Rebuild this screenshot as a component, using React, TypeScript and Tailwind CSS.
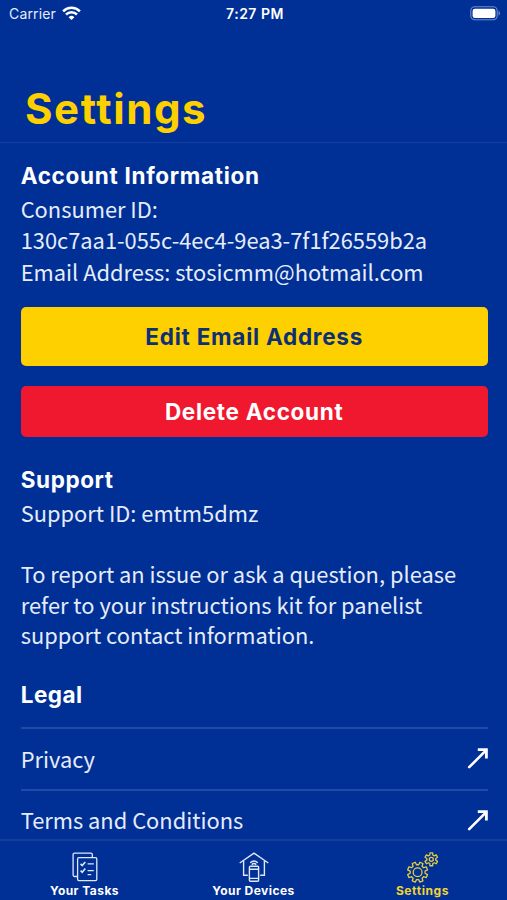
import React from "react";

const heading = "font-['Inter',sans-serif] font-bold text-white whitespace-nowrap";

const App: React.FC = () => {
  return (
    <div className="flex h-[900px] w-[507px] flex-col overflow-hidden bg-[#003095] font-['Noto_Sans_CJK_SC',sans-serif]">
      <StatusBar />
      <header className="flex h-[115px] shrink-0 items-end border-b border-[#143f9f] px-[25px] pb-1.5">
        <h1 className="font-['Inter',sans-serif] text-[42px] leading-[54px] font-bold tracking-[1.6px] text-[#ffd000]">
          Settings
        </h1>
      </header>
      <main className="flex min-h-0 flex-1 flex-col overflow-hidden pt-[19px] pr-[19.3px] pl-[20.7px]">
        <h2 className={`${heading} text-[22.5px] leading-7 tracking-[0.7px]`}>Account Information</h2>
        <div className="mt-[3px] text-[21.85px] leading-[31.3px] whitespace-nowrap text-[#e6ecfa]">
          <p>Consumer ID:</p>
          <p>130c7aa1-055c-4ec4-9ea3-7f1f26559b2a</p>
          <p>Email Address: stosicmm@hotmail.com</p>
        </div>
        <button className="mt-[20.4px] h-[59px] shrink-0 rounded-[5px] bg-[#ffd000] font-['Inter',sans-serif] text-[22.5px] font-bold tracking-[0.75px] text-[#0d2f74]">
          Edit Email Address
        </button>
        <button className="mt-5 h-[51px] shrink-0 rounded-[5px] bg-[#f0182f] font-['Inter',sans-serif] text-[22.5px] font-bold tracking-[0.7px] text-white">
          Delete Account
        </button>
        <h2 className={`${heading} mt-[29px] text-[22.5px] leading-7 tracking-[0.6px]`}>Support</h2>
        <p className="mt-[3px] text-[21.85px] leading-[31px] text-[#e6ecfa]">Support ID: emtm5dmz</p>
        <div className="mt-[31px] text-[21.85px] leading-[30.5px] whitespace-nowrap text-[#e6ecfa]">
          <p>To report an issue or ask a question, please</p>
          <p>refer to your instructions kit for panelist</p>
          <p>support contact information.</p>
        </div>
        <h2 className={`${heading} mt-[30.4px] text-[22.5px] leading-7 tracking-[0.5px]`}>Legal</h2>
        <div className="mt-[18px]">
          <LegalRow label="Privacy" />
          <LegalRow label="Terms and Conditions" />
        </div>
      </main>
      <TabBar />
    </div>
  );
};

const StatusBar = () => (
  <div className="grid h-7 shrink-0 grid-cols-3 items-center pr-[6px] pl-[9px] font-['Inter',sans-serif] text-[14px] text-[#e6ecfa]">
    <div className="flex items-center gap-1.5 pb-px">
      <span className="tracking-[0.15px]">Carrier</span>
      <svg width="19" height="15" viewBox="0 0 19 15" fill="none" stroke="#fff" strokeWidth="2.5">
        <path d="M1.1 5.3a12 12 0 0 1 16.8 0" />
        <path d="M4 8.5a7.9 7.9 0 0 1 11 0" />
        <path d="M6.6 11.2a4.1 4.1 0 0 1 5.8 0L9.5 14.1z" fill="#fff" stroke="none" />
      </svg>
    </div>
    <span className="pb-px text-center font-semibold tracking-[0.5px] text-white">7:27 PM</span>
    <svg className="mb-0.5 justify-self-end" width="31" height="15" viewBox="0 0 31 15">
      <rect x="0.8" y="0.8" width="26.4" height="13" rx="4" fill="none" stroke="#6f8cca" strokeWidth="1.1" />
      <rect x="2.6" y="2.7" width="22.8" height="9.2" rx="2.2" fill="#fff" />
      <path d="M28.6 5v4.6c1.9-.6 1.9-4 0-4.6z" fill="#6f8cca" />
    </svg>
  </div>
);

const LegalRow = ({ label }: { label: string }) => (
  <a className="flex h-[61.5px] items-center justify-between border-t-2 border-[#1f4ba6] pb-px text-[21.85px] leading-[31px] text-[#e6ecfa]">
    <span>{label}</span>
    <svg width="22" height="22" viewBox="0 0 22 22" fill="none" stroke="#fff" strokeWidth="2.6">
      <path d="M3.2 20.2 20 3.4" strokeLinecap="round" />
      <path d="M11.8 2.6h8.6v8.8" strokeWidth="2.8" />
    </svg>
  </a>
);

// toothed outline shared by the big and the small gear
const gearPath = (cx: number, cy: number, outer: number, inner: number, teeth: number) => {
  const points: string[] = [];
  const step = (Math.PI * 2) / teeth;
  for (let i = 0; i < teeth; i++) {
    const a = (i + (teeth === 8 ? 0.5 : 0)) * step - Math.PI / 2;
    [
      [-0.32, inner],
      [-0.2, outer],
      [0.2, outer],
      [0.32, inner],
    ].forEach(([t, r]) => {
      points.push(`${(cx + Math.cos(a + t * step) * r).toFixed(2)} ${(cy + Math.sin(a + t * step) * r).toFixed(2)}`);
    });
  }
  return `M${points.join("L")}Z`;
};

const TasksIcon = () => (
  <svg width="26" height="30" viewBox="0 0 26 30" fill="none" stroke="#dfe7fa" strokeWidth="1.3">
    <path d="M5.5 24.5H2.6a1.5 1.5 0 0 1-1.5-1.5V2.6a1.5 1.5 0 0 1 1.5-1.5h16.2a1.5 1.5 0 0 1 1.5 1.5v2.7" />
    <rect x="5.6" y="5.6" width="19.2" height="23" rx="1.3" />
    <path d="m8.6 11.9 1.6 1.6 3.1-3.6M8.6 18.6l1.6 1.6 3.1-3.6" strokeWidth="1.6" />
    <path d="M15.6 11.9h6.2M15.6 18.6h6.2M15.6 22.7h3.6" />
  </svg>
);

const DevicesIcon = () => (
  <svg width="30" height="30" viewBox="0 0 30 30" fill="none" stroke="#dfe7fa" strokeWidth="1.4">
    <path d="M.7 11 15 1.2 29.3 11" />
    <path d="M4.6 9v14.2h4.2M25.4 9v14.2h-4.2" />
    <rect x="10.4" y="14.3" width="9.2" height="14.9" rx="1" />
    <path d="M10.4 17.2h9.2M10.4 26.4h9.2" />
    <path d="M11.2 10.8q3.8-3.5 7.6 0M12.7 12.6q2.3-2 4.6 0" />
  </svg>
);

const GearsIcon = () => (
  <svg width="31" height="31" viewBox="0 0 31 31" fill="none" stroke="#e3cc45" strokeWidth="1.3" strokeLinejoin="round">
    <path d={gearPath(10.6, 20.2, 10.2, 7.5, 8)} />
    <circle cx="10.6" cy="20.2" r="4.4" />
    <path d={gearPath(24.3, 7.3, 6.6, 4.5, 6)} />
    <circle cx="24.3" cy="7.3" r="2" />
  </svg>
);

const tabs = [
  { label: "Your Tasks", icon: <TasksIcon />, active: false },
  { label: "Your Devices", icon: <DevicesIcon />, active: false },
  { label: "Settings", icon: <GearsIcon />, active: true },
];

const TabBar = () => (
  <nav className="grid h-[61px] shrink-0 grid-cols-3 border-t-2 border-[#113d9c] bg-[#003095]">
    {tabs.map((tab) => (
      <div key={tab.label} className="flex flex-col items-center pt-[10px]">
        <div className="flex h-8 items-center">{tab.icon}</div>
        <span
          className={`font-['Inter',sans-serif] text-[12px] leading-4 font-bold ${
            tab.active ? "tracking-[0.6px] text-[#f0d436]" : "tracking-[0.45px] text-white"
          }`}
        >
          {tab.label}
        </span>
      </div>
    ))}
  </nav>
);

export default App;
